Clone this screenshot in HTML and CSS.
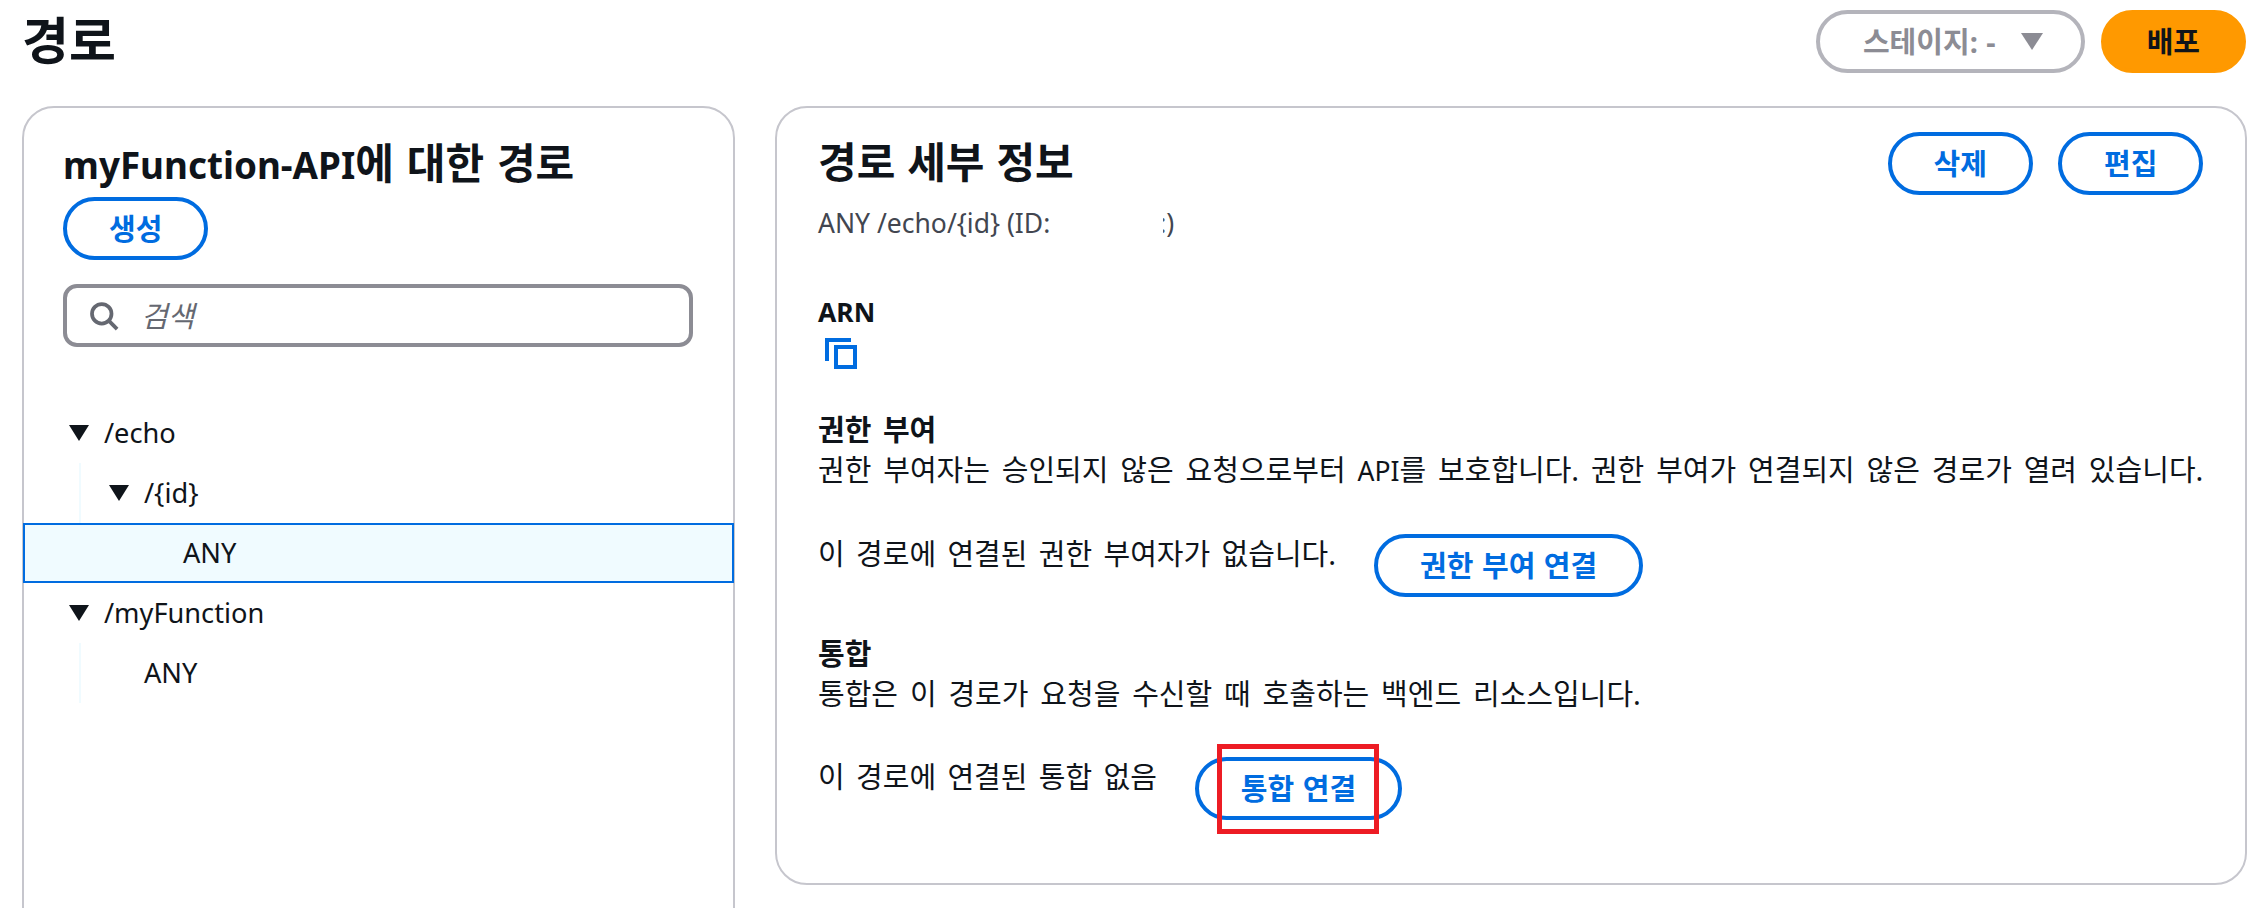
FILE: index.html
```html
<!DOCTYPE html>
<html lang="ko">
<head>
    <meta charset="UTF-8">
    <title>경로</title>
    <link rel="stylesheet" href="styles.css">
</head>
<body>
    <header class="page-header">
        <h1>경로</h1>
        <div class="header-actions">
            <button class="btn btn-disabled">스테이지: - <span class="caret caret-grey"></span></button>
            <button class="btn btn-primary">배포</button>
        </div>
    </header>

    <main class="columns">
        <section class="panel routes">
            <h2><span class="en-title">myFunction-API</span>에 대한 경로</h2>
            <button class="btn">생성</button>
            <div class="search">
                <svg class="search-icon" viewBox="0 0 16 16" fill="none" stroke="#656871" stroke-width="2">
                    <circle cx="6.8" cy="6.8" r="5.2"/>
                    <path d="M10.5 10.5 15 15"/>
                </svg>
                <span class="placeholder">검색</span>
            </div>
            <ul class="tree en">
                <li class="tree-row"><span class="caret"></span>/echo</li>
                <li class="tree-row level-1"><span class="guide"></span><span class="caret"></span>/{id}</li>
                <li class="tree-row level-2 selected">ANY</li>
                <li class="tree-row"><span class="caret"></span>/myFunction</li>
                <li class="tree-row leaf"><span class="guide"></span>ANY</li>
            </ul>
        </section>

        <section class="panel details">
            <div class="details-head">
                <div>
                    <h2 class="details-title">경로 세부 정보</h2>
                    <p class="subtitle en">ANY /echo/{id} (ID:<span class="redacted"><span class="sliver">:</span></span>)</p>
                </div>
                <div class="head-actions">
                    <button class="btn">삭제</button>
                    <button class="btn">편집</button>
                </div>
            </div>

            <div class="arn">
                <h3 class="en">ARN</h3>
                <svg class="copy-icon" viewBox="0 0 32 32" fill="none" stroke="#006ce0" stroke-width="4">
                    <path d="M2 24V3h24"/>
                    <rect x="11" y="10" width="19" height="20"/>
                </svg>
            </div>

            <div class="block">
                <h3>권한 부여</h3>
                <p>권한 부여자는 승인되지 않은 요청으로부터 <span class="en">API</span>를 보호합니다. 권한 부여가 연결되지 않은 경로가 열려 있습니다.</p>
                <div class="attach-row">
                    <p>이 경로에 연결된 권한 부여자가 없습니다.</p>
                    <button class="btn">권한 부여 연결</button>
                </div>
            </div>

            <div class="block">
                <h3>통합</h3>
                <p>통합은 이 경로가 요청을 수신할 때 호출하는 백엔드 리소스입니다.</p>
                <div class="attach-row">
                    <p>이 경로에 연결된 통합 없음</p>
                    <div class="marked">
                        <button class="btn">통합 연결</button>
                        <span class="red-box"></span>
                    </div>
                </div>
            </div>
        </section>
    </main>
</body>
</html>
```

FILE: styles.css
```css
:root {
    --blue: #006ce0;
    --text: #0f141a;
    --border: #c6c6cd;
}

* {
    box-sizing: border-box;
}

html, body {
    height: 908px;
    overflow: hidden;
}

body {
    margin: 0;
    padding: 10px 10px 0 22px;
    background: #fff;
    color: var(--text);
    font-family: "Noto Sans", "Noto Sans CJK KR", sans-serif;
    font-size: 29px;
    line-height: 40px;
    word-spacing: 4px;
}

h1, h2, h3, p, ul {
    margin: 0;
    padding: 0;
}

/* latin text sits smaller than the hangul around it */
.en {
    font-size: 26.5px;
    word-spacing: 0;
}

.page-header {
    display: flex;
    justify-content: space-between;
    height: 96px;
}

h1 {
    font-size: 51px;
    line-height: 60px;
    font-weight: 700;
}

.header-actions {
    display: flex;
    gap: 16px;
    align-items: flex-start;
}

.btn {
    height: 63px;
    padding: 0 42px;
    border: 4px solid var(--blue);
    border-radius: 32px;
    background: #fff;
    color: var(--blue);
    font: inherit;
    font-weight: 700;
    word-spacing: 1px;
    white-space: nowrap;
}

.btn-primary {
    background: #ff9900;
    border-color: #ff9900;
    color: var(--text);
}

.btn-disabled {
    display: flex;
    align-items: center;
    gap: 25px;
    padding: 0 38px 0 43px;
    border-color: #b4b4bb;
    color: #8c8c94;
}

.caret {
    display: inline-block;
    flex: none;
    width: 0;
    height: 0;
    margin-right: 15px;
    border-left: 10px solid transparent;
    border-right: 10px solid transparent;
    border-top: 16px solid var(--text);
}

.caret-grey {
    margin-right: 0;
    border-left-width: 11px;
    border-right-width: 11px;
    border-top: 17px solid #8c8c94;
}

.columns {
    display: flex;
    gap: 40px;
    align-items: flex-start;
}

.panel {
    border: 2px solid var(--border);
    border-radius: 32px;
}

.routes {
    flex: none;
    width: 713px;
    height: 900px;
    padding: 31px 0 0;
}

.routes h2, .routes > .btn, .search {
    margin-left: 39px;
}

h2 {
    font-size: 42px;
    line-height: 48px;
    font-weight: 700;
    word-spacing: 2px;
}

.en-title {
    font-size: 36.8px;
}

.routes > .btn {
    display: block;
    margin-top: 8px;
}

.search {
    display: flex;
    align-items: center;
    gap: 22px;
    width: 630px;
    height: 63px;
    margin-top: 24px;
    padding-left: 22px;
    border: 4px solid #8c8c94;
    border-radius: 14px;
}

.search-icon {
    width: 30px;
    height: 30px;
}

.placeholder {
    color: #656871;
    font-style: italic;
}

.tree {
    margin-top: 56px;
    font-size: 27.2px;
    list-style: none;
}

.tree-row {
    position: relative;
    display: flex;
    align-items: center;
    height: 60px;
    padding-left: 45px;
}

.level-1 {
    padding-left: 85px;
}

.leaf {
    padding-left: 120px;
}

.guide {
    position: absolute;
    left: 55px;
    top: 0;
    bottom: 0;
    width: 2px;
    background: #f0fbff;
}

.selected {
    margin: 0 -1px;
    padding-left: 160px;
    background: #f0fbff;
    outline: 2.5px solid var(--blue);
    outline-offset: -2.5px;
}

.details {
    flex: 1;
    height: 779px;
    padding: 24px 42px 0 41px;
}

.details-head {
    display: flex;
    justify-content: space-between;
}

.details-title {
    margin-top: 6px;
    word-spacing: 1px;
}

.head-actions {
    display: flex;
    gap: 25px;
}

.subtitle {
    margin-top: 17px;
    color: #424650;
}

/* the id is whited out in the shot, only a sliver of its last character shows */
.redacted {
    display: inline-block;
    width: 116px;
    text-align: right;
}

.sliver {
    display: inline-block;
    clip-path: inset(0 0 0 55%);
}

h3 {
    font-size: 29px;
    line-height: 40px;
    font-weight: 700;
}

h3.en {
    font-size: 26.5px;
}

.arn {
    margin-top: 49px;
}

.copy-icon {
    display: block;
    width: 32px;
    height: 32px;
    margin: 5px 0 0 7px;
}

.block {
    margin-top: 41px;
}

.block + .block {
    margin-top: 37px;
}

.block p {
    white-space: nowrap;
    word-spacing: 4.3px;
}

.block p .en {
    word-spacing: 0;
}

.attach-row {
    display: flex;
    align-items: flex-start;
    gap: 38px;
    margin-top: 43px;
}

.attach-row p {
    word-spacing: 3.8px;
}

.marked {
    position: relative;
}

.red-box {
    position: absolute;
    left: 22px;
    top: -13px;
    width: 162px;
    height: 90px;
    border: 5px solid #ed1c24;
}
```
